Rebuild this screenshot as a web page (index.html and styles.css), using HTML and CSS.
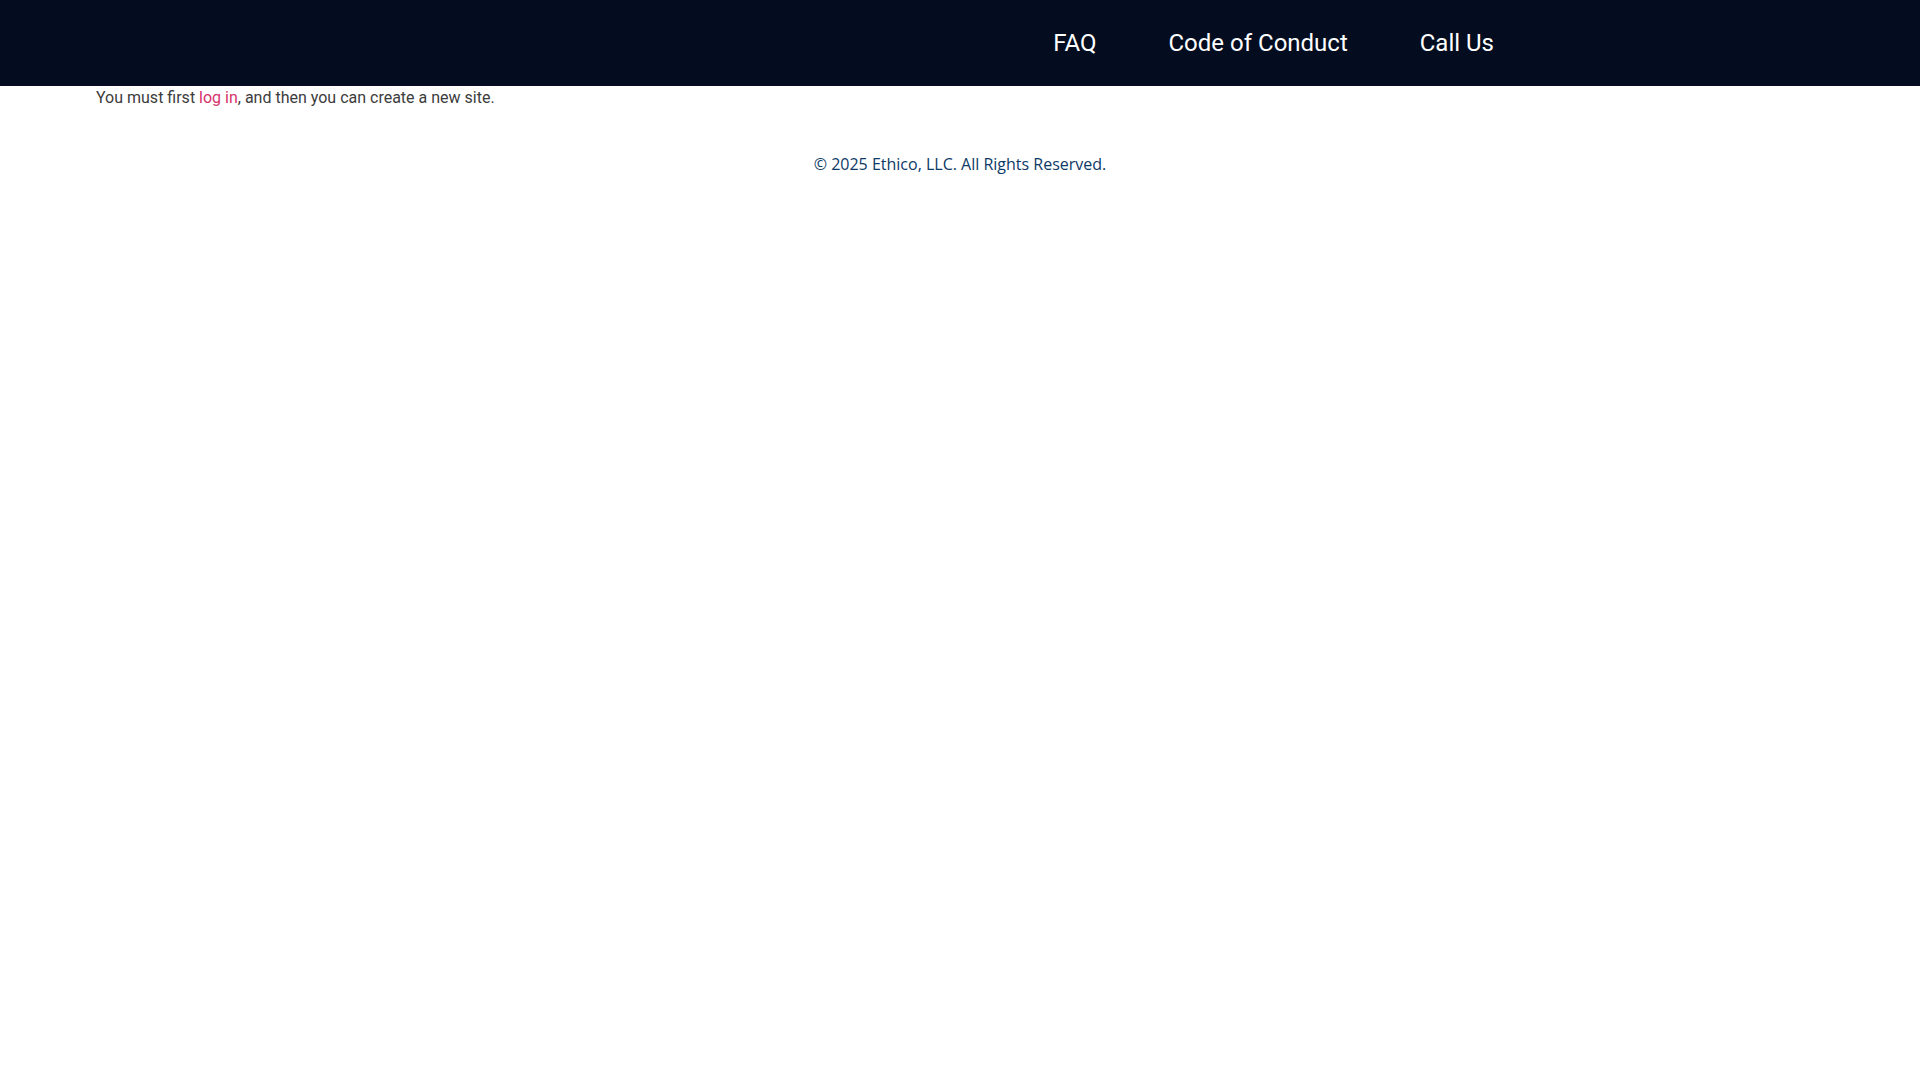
FILE: index.html
```html
<!DOCTYPE html>
<html lang="en">
<head>
  <meta charset="UTF-8" />
  <meta name="viewport" content="width=device-width, initial-scale=1.0" />
  <title>Create a new site</title>
  <link rel="stylesheet" href="styles.css">
</head>
<body>
  <header class="site-header">
    <nav class="main-nav">
      <a href="#">FAQ</a>
      <a href="#">Code of Conduct</a>
      <a href="#">Call Us</a>
    </nav>
  </header>

  <main class="content">
    <p>You must first <a href="#">log in</a>, and then you can create a new site.</p>
  </main>

  <footer class="site-footer">
    <p>&copy; 2025 Ethico, LLC. All Rights Reserved.</p>
  </footer>
</body>
</html>
```

FILE: styles.css
```css
body {
  margin: 0;
  font-family: Roboto, 'Liberation Sans', sans-serif;
  background: #fff;
  color: #3c3c3c;
}
.site-header {
  background-color: #030d1f;
  height: 86px;
  display: flex;
  align-items: center;
  justify-content: flex-end;
  padding-right: 390px;
}
.main-nav {
  display: flex;
}
.main-nav a {
  color: #fff;
  text-decoration: none;
  font-size: 24px;
  padding: 0 36px;
}
.content {
  padding: 0 96px;
}
.content p {
  margin: 0;
  font-size: 16px;
  line-height: 24px;
}
.content a {
  color: #d6336c;
  text-decoration: none;
}
.site-footer {
  margin-top: 42px;
  text-align: center;
}
.site-footer p {
  margin: 0;
  font-family: 'Open Sans', sans-serif;
  font-size: 16px;
  line-height: 24px;
  color: #0d3a66;
}
```
